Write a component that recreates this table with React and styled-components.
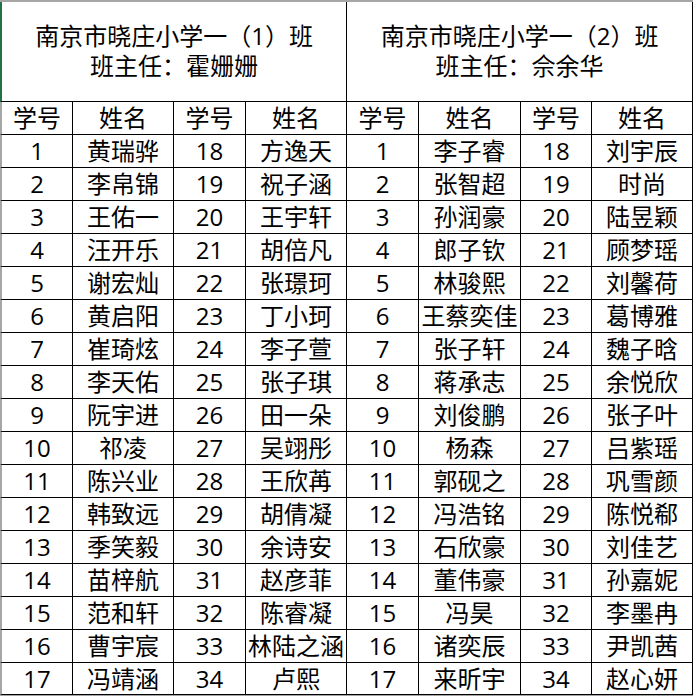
import React from "react";
import styled, { createGlobalStyle } from "styled-components";

const Global = createGlobalStyle`
  html, body { margin: 0; padding: 0; background: #ffffff; }
  body { font-family: "Open Sans", "Noto Sans CJK SC", sans-serif; }
`;

const Wrap = styled.div`
  width: 693px;
  border-bottom: 1px solid #a6a6a6;
`;

const Sheet = styled.table`
  border-collapse: separate;
  border-spacing: 0;
  table-layout: fixed;
  width: 693px;
  border-top: 2px solid #a6a6a6;
  color: #000;
  font-size: 24px;
`;

const Cell = styled.td`
  padding: 0;
  height: ${(p) => p.$h}px;
  border-right: 1px solid #000;
  border-bottom: 1px solid #000;
  border-left: ${(p) => (p.$first ? `2px solid ${p.$edge}` : "none")};
  text-align: center;
  vertical-align: middle;
  white-space: nowrap;
  overflow: hidden;
  line-height: 30px;
  font-family: "Open Sans", "Noto Sans CJK SC", sans-serif;
`;

const TitleCell = styled(Cell)`
  line-height: 30px;
  padding-bottom: 2px;
`;

const widths = [70, 100, 71, 100, 71, 101, 70, 100];

const classes = [
  {
    title: "南京市晓庄小学一（1）班",
    teacher: "班主任：霍姗姗",
    names: [
      "黄瑞骅", "李帛锦", "王佑一", "汪开乐", "谢宏灿", "黄启阳", "崔琦炫", "李天佑", "阮宇进",
      "祁凌", "陈兴业", "韩致远", "季笑毅", "苗梓航", "范和轩", "曹宇宸", "冯靖涵",
      "方逸天", "祝子涵", "王宇轩", "胡倍凡", "张璟珂", "丁小珂", "李子萱", "张子琪", "田一朵",
      "吴翊彤", "王欣苒", "胡倩凝", "余诗安", "赵彦菲", "陈睿凝", "林陆之涵", "卢熙",
    ],
  },
  {
    title: "南京市晓庄小学一（2）班",
    teacher: "班主任：佘余华",
    names: [
      "李子睿", "张智超", "孙润豪", "郎子钦", "林骏熙", "王蔡奕佳", "张子轩", "蒋承志", "刘俊鹏",
      "杨森", "郭砚之", "冯浩铭", "石欣豪", "董伟豪", "冯昊", "诸奕辰", "来昕宇",
      "刘宇辰", "时尚", "陆昱颖", "顾梦瑶", "刘馨荷", "葛博雅", "魏子晗", "余悦欣", "张子叶",
      "吕紫瑶", "巩雪颜", "陈悦郗", "刘佳艺", "孙嘉妮", "李墨冉", "尹凯茜", "赵心妍",
    ],
  },
];

const rows = Array.from({ length: 17 }, (_, i) => i);

export default function App() {
  return (
    <>
      <Global />
      <Wrap>
        <Sheet>
          <colgroup>
            {widths.map((w, i) => (
              <col key={i} style={{ width: w + (i === 0 ? 3 : 1) }} />
            ))}
          </colgroup>
          <tbody>
            <tr>
              {classes.map((c, ci) => (
                <TitleCell
                  key={ci}
                  colSpan={4}
                  $h={97}
                  $first={ci === 0}
                  $edge="#217346"
                >
                  {c.title}
                  <br />
                  {c.teacher}
                </TitleCell>
              ))}
            </tr>
            <tr>
              {classes.map((c, ci) =>
                ["学号", "姓名", "学号", "姓名"].map((h, hi) => (
                  <Cell
                    key={`${ci}-${hi}`}
                    $h={32}
                    $first={ci === 0 && hi === 0}
                    $edge="#a6a6a6"
                  >
                    {h}
                  </Cell>
                ))
              )}
            </tr>
            {rows.map((r) => (
              <tr key={r}>
                {classes.map((c, ci) => (
                  <React.Fragment key={ci}>
                    <Cell $h={r === 16 ? 31 : 32} $first={ci === 0} $edge="#a6a6a6">
                      {r + 1}
                    </Cell>
                    <Cell $h={r === 16 ? 31 : 32}>{c.names[r]}</Cell>
                    <Cell $h={r === 16 ? 31 : 32}>{r + 18}</Cell>
                    <Cell $h={r === 16 ? 31 : 32}>{c.names[r + 17]}</Cell>
                  </React.Fragment>
                ))}
              </tr>
            ))}
          </tbody>
        </Sheet>
      </Wrap>
    </>
  );
}
